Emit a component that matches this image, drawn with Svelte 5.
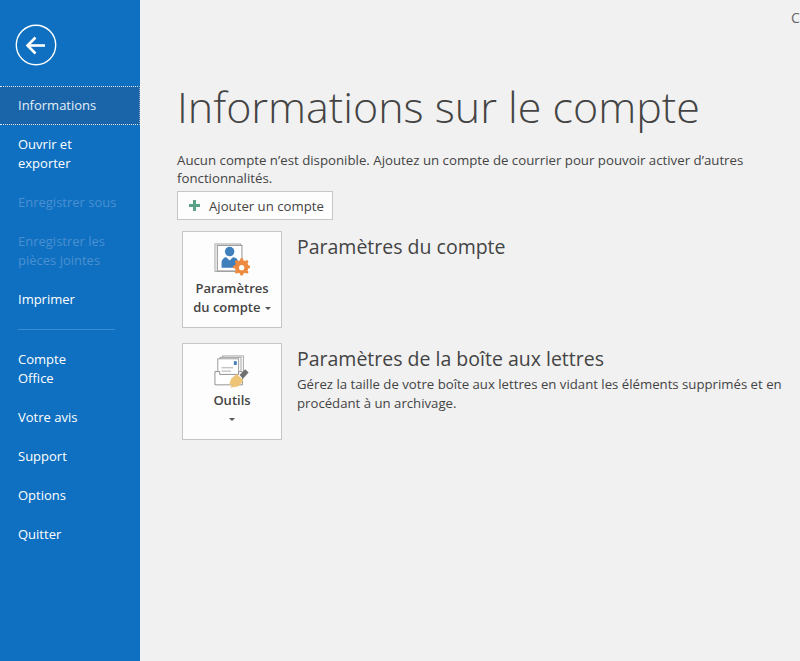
<script lang="ts">
  type NavItem = { label: string[]; active?: boolean; disabled?: boolean };

  const topItems: NavItem[] = [
    { label: ['Informations'], active: true },
    { label: ['Ouvrir et', 'exporter'] },
    { label: ['Enregistrer sous'], disabled: true },
    { label: ['Enregistrer les', 'pièces jointes'], disabled: true },
    { label: ['Imprimer'] }
  ];

  const bottomItems: NavItem[] = [
    { label: ['Compte', 'Office'] },
    { label: ['Votre avis'] },
    { label: ['Support'] },
    { label: ['Options'] },
    { label: ['Quitter'] }
  ];
</script>

{#snippet navItem(item: NavItem)}
  <button class="nav-item" class:active={item.active} class:disabled={item.disabled}>
    {#each item.label as line}
      <span>{line}</span>
    {/each}
  </button>
{/snippet}

<div class="window">
  <nav class="sidebar">
    <button class="back" aria-label="Retour">
      <svg width="42" height="42" viewBox="0 0 42 42" fill="none" stroke="#fff">
        <circle cx="21" cy="21" r="19.7" stroke-width="1.4" />
        <path d="M12 21.500h18" stroke-width="2.600" />
        <path d="M20.500 13.500l-8 8 8 8" stroke-width="2.600" />
      </svg>
    </button>

    <div class="nav-list">
      {#each topItems as item}
        {@render navItem(item)}
      {/each}
    </div>
    <div class="divider"></div>
    <div class="nav-list">
      {#each bottomItems as item}
        {@render navItem(item)}
      {/each}
    </div>
  </nav>

  <main class="main">
    <div class="topbar">C</div>
    <h1 class="title">Informations sur le compte</h1>

    <p class="intro">
      Aucun compte n’est disponible. Ajoutez un compte de courrier pour pouvoir activer d’autres
      fonctionnalités.
    </p>

    <button class="add-btn">
      <svg width="11" height="11" viewBox="0 0 11 11" fill="#5aa287">
        <path d="M4 0h3v4h4v3H7v4H4V7H0V4h4z" />
      </svg>
      Ajouter un compte
    </button>

    <section class="row first">
      <button class="tile">
        <svg width="36" height="36" viewBox="0 0 38 38">
          <rect x="1" y="1" width="27" height="29" fill="#f4f4f4" stroke="#a8a8a8" />
          <rect x="3.500" y="2.500" width="26" height="27" fill="#fff" stroke="#8e8e8e" />
          <circle cx="16.500" cy="9" r="5" fill="#3f7fbc" />
          <path d="M8 26v-5c0-4 3-6 5-6l3.500 3.500L20 15c2 0 4 1 5 3v8z" fill="#3f7fbc" />
          <path d="M28 16h2.400l.6 2.200 1.900.8 2-1.100 1.600 1.600-1.100 2 .8 1.900 2.200.6v2.400l-2.200.6-.8 1.900 1.100 2-1.600 1.600-2-1.100-1.900.8-.6 2.200H28l-.6-2.200-1.900-.8-2 1.100-1.600-1.600 1.100-2-.8-1.900-2.200-.6v-2.400l2.200-.6.8-1.900-1.100-2 1.600-1.600 2 1.100 1.900-.8z" fill="#ed8a3f" />
          <circle cx="29.200" cy="26" r="2.800" fill="#fff" />
        </svg>
        <span class="tile-label">Paramètres</span>
        <span class="tile-label">du compte <i class="caret"></i></span>
      </button>
      <div class="row-text">
        <h2>Paramètres du compte</h2>
      </div>
    </section>

    <section class="row second">
      <button class="tile">
        <svg width="36" height="36" viewBox="0 0 38 38">
          <rect x="9" y="1" width="22" height="20" fill="#fff" stroke="#a0a0a0" />
          <rect x="6.500" y="2.500" width="22" height="20" fill="#fff" stroke="#a0a0a0" />
          <rect x="4" y="4" width="22" height="20" fill="#fff" stroke="#9a9a9a" />
          <rect x="21" y="6.500" width="3" height="4" fill="#3f7fbc" />
          <path d="M8 13.500h12M8 17h10" stroke="#a8a8a8" stroke-width="1" />
          <path d="M1 17.500h5v3h20v-3h4v14H1z" fill="#fff" stroke="#8e8e8e" />
          <path d="M27 21l6-6 3.500 3.500-6 6.500z" fill="#6f6f6f" />
          <path d="M18 25l6-5 7 7-5 6-9 1.500 3-4-4 1.500z" fill="#eec477" />
        </svg>
        <span class="tile-label">Outils</span>
        <i class="caret standalone"></i>
      </button>
      <div class="row-text">
        <h2>Paramètres de la boîte aux lettres</h2>
        <p>Gérez la taille de votre boîte aux lettres en vidant les éléments supprimés et en procédant à un archivage.</p>
      </div>
    </section>
  </main>
</div>

<style>
  :global(body) {
    margin: 0;
    background: #f1f1f1;
  }

  .window {
    display: flex;
    width: 800px;
    height: 661px;
    overflow: hidden;
    font-family: "Open Sans", "Noto Sans", sans-serif;
    color: #444;
  }

  button {
    font-family: inherit;
    cursor: pointer;
  }

  .sidebar {
    flex: 0 0 140px;
    box-sizing: border-box;
    padding-top: 24px;
    background: #0f6fc0;
    display: flex;
    flex-direction: column;
  }

  .back {
    display: block;
    width: 42px;
    height: 42px;
    margin: 0 0 20px 15px;
    padding: 0;
    border: none;
    background: none;
  }

  .back svg {
    display: block;
  }

  .nav-list {
    display: flex;
    flex-direction: column;
  }

  .nav-item {
    display: flex;
    flex-direction: column;
    justify-content: center;
    box-sizing: border-box;
    width: 140px;
    padding: 10px 0 10px 18px;
    border: none;
    background: none;
    color: #fff;
    font-size: 13px;
    line-height: 19px;
    text-align: left;
  }

  .nav-item.active {
    padding: 9px 0 9px 18px;
    background: #1a65a9;
    border-top: 1px dotted #dfe9f2;
    border-bottom: 1px dotted #dfe9f2;
    border-right: 1px dotted #8aa8c6;
    color: #e4eef7;
  }

  .nav-item.disabled {
    color: #4a8fd0;
  }

  .divider {
    height: 1px;
    margin: 10px 25px 10px 18px;
    background: #3b8bd0;
  }

  .main {
    flex: 1;
    min-width: 0;
    overflow: hidden;
    background: #f1f1f1;
  }

  .topbar {
    height: 24px;
    padding: 8px 0 0 651px;
    font-size: 14px;
    line-height: 19px;
    white-space: nowrap;
    color: #666;
  }

  .title {
    margin: 47px 0 0 37px;
    font-size: 43px;
    font-weight: 300;
    line-height: 56px;
    white-space: nowrap;
    color: #444;
  }

  .intro {
    width: 610px;
    margin: 16px 0 0 37px;
    font-size: 13.250px;
    line-height: 18px;
  }

  .add-btn {
    display: flex;
    align-items: center;
    gap: 9px;
    box-sizing: border-box;
    width: 156px;
    height: 29px;
    margin: 4px 0 0 37px;
    padding: 0 0 0 11px;
    border: 1px solid #c6c6c6;
    background: #fdfdfd;
    color: #444;
    font-size: 13.200px;
    white-space: nowrap;
  }

  .row {
    display: flex;
    gap: 15px;
    margin-left: 42px;
  }

  .row.first {
    margin-top: 11px;
  }

  .row.second {
    margin-top: 15px;
  }

  .tile {
    display: flex;
    flex-direction: column;
    align-items: center;
    box-sizing: border-box;
    flex: 0 0 100px;
    height: 97px;
    padding: 11px 0 0;
    border: 1px solid #c6c6c6;
    background: #fdfdfd;
    color: #444;
  }

  .tile-label {
    font-size: 13px;
    font-weight: 600;
    line-height: 19px;
    white-space: nowrap;
  }

  .caret {
    display: inline-block;
    width: 0;
    height: 0;
    margin-left: 1px;
    vertical-align: middle;
    border: 3px solid transparent;
    border-top-color: #555;
    border-bottom: none;
  }

  .caret.standalone {
    margin: 8px 0 0;
  }

  .row-text {
    min-width: 0;
  }

  .row-text h2 {
    margin: 3px 0 0;
    font-size: 19.500px;
    font-weight: 400;
    line-height: 26px;
    white-space: nowrap;
    color: #444;
  }

  .row-text p {
    margin: 3px 0 0;
    font-size: 13.200px;
    line-height: 19px;
  }
</style>
